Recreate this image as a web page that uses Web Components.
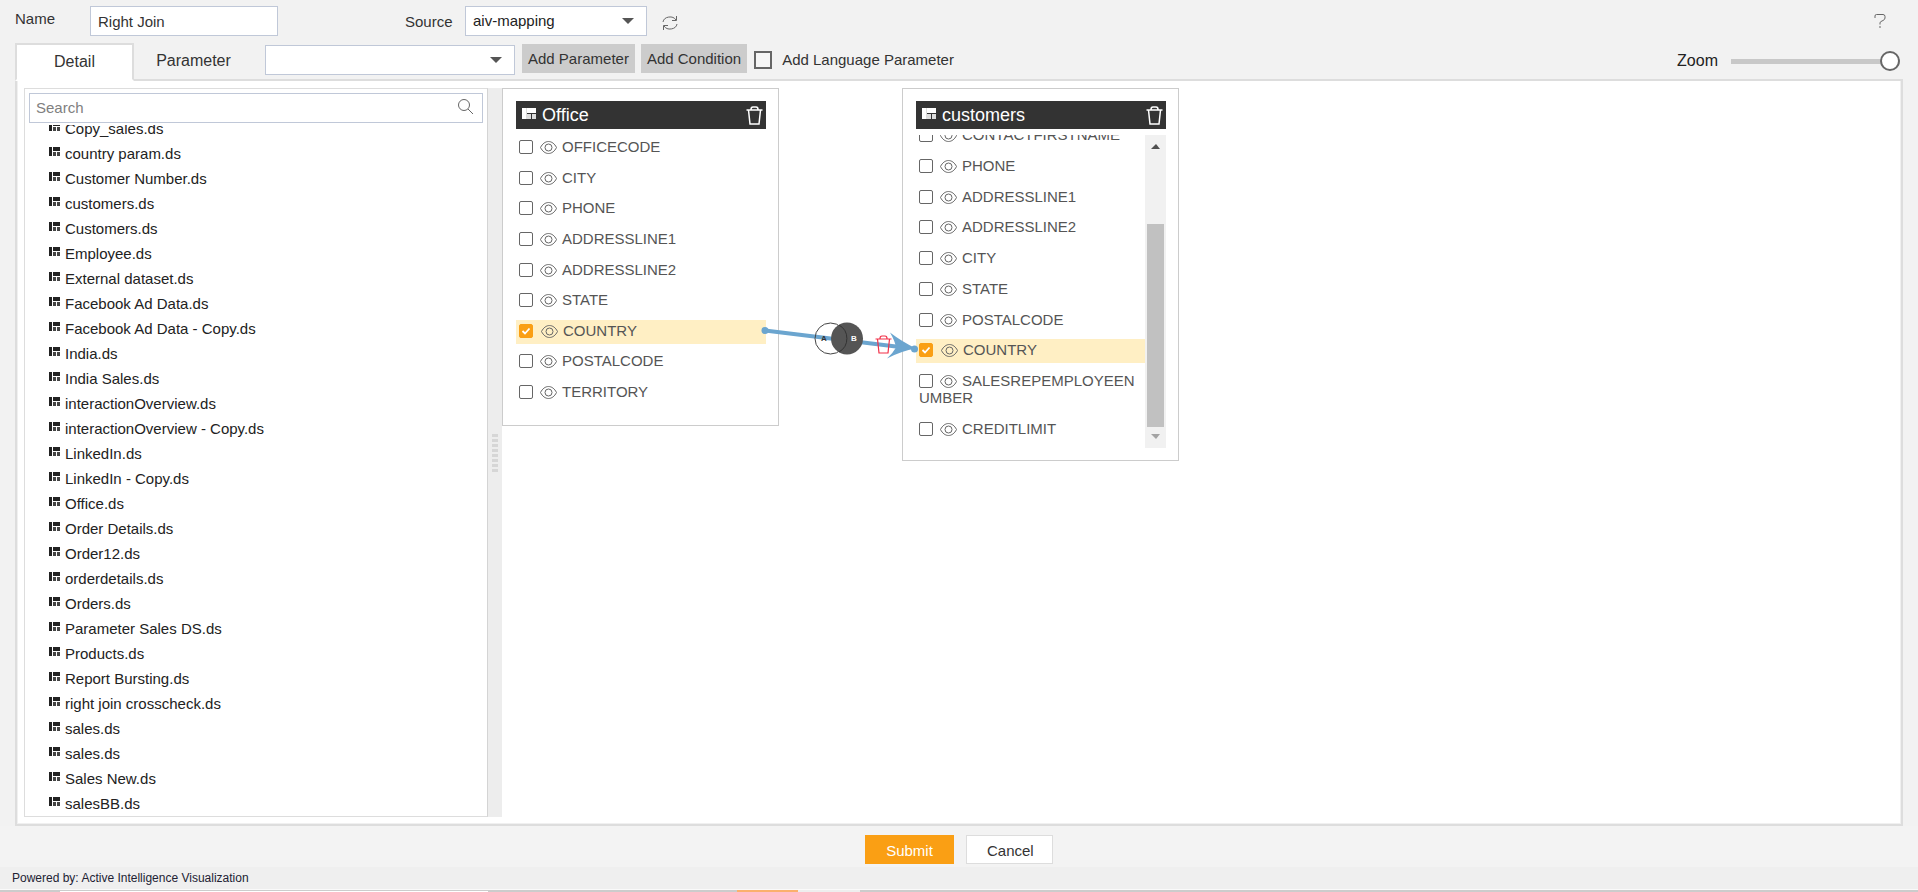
<!DOCTYPE html>
<html lang="en">
<head>
<meta charset="utf-8">
<title>Right Join - Dataset</title>
<style>
  body { margin: 0; font-family: "Liberation Sans", Arial, sans-serif; font-size: 15px; color: #333; background: #f2f2f2; }
</style>
</head>
<body>
<aiv-app>
  <aiv-top-bar slot="top"></aiv-top-bar>
  <aiv-tab-bar slot="tabs"></aiv-tab-bar>
  <aiv-file-tree slot="tree">
    <aiv-file>Copy_sales.ds</aiv-file>
    <aiv-file>country param.ds</aiv-file>
    <aiv-file>Customer Number.ds</aiv-file>
    <aiv-file>customers.ds</aiv-file>
    <aiv-file>Customers.ds</aiv-file>
    <aiv-file>Employee.ds</aiv-file>
    <aiv-file>External dataset.ds</aiv-file>
    <aiv-file>Facebook Ad Data.ds</aiv-file>
    <aiv-file>Facebook Ad Data - Copy.ds</aiv-file>
    <aiv-file>India.ds</aiv-file>
    <aiv-file>India Sales.ds</aiv-file>
    <aiv-file>interactionOverview.ds</aiv-file>
    <aiv-file>interactionOverview - Copy.ds</aiv-file>
    <aiv-file>LinkedIn.ds</aiv-file>
    <aiv-file>LinkedIn - Copy.ds</aiv-file>
    <aiv-file>Office.ds</aiv-file>
    <aiv-file>Order Details.ds</aiv-file>
    <aiv-file>Order12.ds</aiv-file>
    <aiv-file>orderdetails.ds</aiv-file>
    <aiv-file>Orders.ds</aiv-file>
    <aiv-file>Parameter Sales DS.ds</aiv-file>
    <aiv-file>Products.ds</aiv-file>
    <aiv-file>Report Bursting.ds</aiv-file>
    <aiv-file>right join crosscheck.ds</aiv-file>
    <aiv-file>sales.ds</aiv-file>
    <aiv-file>sales.ds</aiv-file>
    <aiv-file>Sales New.ds</aiv-file>
    <aiv-file>salesBB.ds</aiv-file>
  </aiv-file-tree>
  <aiv-canvas slot="canvas">
    <aiv-dataset style="left:0;top:0;--view:278px;--rows:269px">
      <span slot="title">Office</span>
      <aiv-column>OFFICECODE</aiv-column>
      <aiv-column>CITY</aiv-column>
      <aiv-column>PHONE</aiv-column>
      <aiv-column>ADDRESSLINE1</aiv-column>
      <aiv-column>ADDRESSLINE2</aiv-column>
      <aiv-column>STATE</aiv-column>
      <aiv-column checked>COUNTRY</aiv-column>
      <aiv-column>POSTALCODE</aiv-column>
      <aiv-column>TERRITORY</aiv-column>
    </aiv-dataset>
    <aiv-dataset scrolled style="left:400px;top:0;--view:313px;--rows:318px">
      <span slot="title">customers</span>
      <aiv-column>CONTACTFIRSTNAME</aiv-column>
      <aiv-column>PHONE</aiv-column>
      <aiv-column>ADDRESSLINE1</aiv-column>
      <aiv-column>ADDRESSLINE2</aiv-column>
      <aiv-column>CITY</aiv-column>
      <aiv-column>STATE</aiv-column>
      <aiv-column>POSTALCODE</aiv-column>
      <aiv-column checked>COUNTRY</aiv-column>
      <aiv-column>SALESREPEMPLOYEENUMBER</aiv-column>
      <aiv-column>CREDITLIMIT</aiv-column>
    </aiv-dataset>
    <aiv-join-link></aiv-join-link>
  </aiv-canvas>
  <aiv-actions slot="actions"></aiv-actions>
  <aiv-footer slot="footer">Powered by: Active Intelligence Visualization</aiv-footer>
</aiv-app>

<script>
const define = (name, html) => {
  const template = document.createElement('template');
  template.innerHTML = '<style>*{box-sizing:border-box}svg{display:block;fill:none}button,input,select{font:inherit;margin:0;border-radius:0}</style>' + html;
  customElements.define(name, class extends HTMLElement {
    constructor() {
      super();
      this.attachShadow({ mode: 'open' }).append(template.content.cloneNode(true));
    }
    connectedCallback() {
      const box = this.shadowRoot.querySelector('input.pick');
      if (box) box.checked = this.hasAttribute('checked');
    }
  });
};

const trash = `<path d="M.500 4h16M5 3.500Q5 1 7 1h3q2 0 2 2.500M2.500 4l1.500 14h9l1.500-14"/>`;

define('aiv-app', `
<style>
  :host { display: flex; flex-direction: column; height: 100vh; min-height: 640px; }
  main { flex: 1; min-height: 0; margin: 0 15px; display: flex; background: #fff;
         border: 2px solid #ddd; border-top: 0; padding: 7px 0 7px 7px; box-shadow: inset -1px -1px #f0f0f0, inset 1px 0 #f0f0f0; }
  .split { flex: none; width: 14px; background: #ededed; display: flex; align-items: center; justify-content: center; }
  .grip { width: 6px; height: 38px; background: repeating-linear-gradient(#d6d6d6 0 3px, #ededed 3px 5px); }
</style>
<slot name="top"></slot>
<slot name="tabs"></slot>
<main><slot name="tree"></slot><div class="split"><div class="grip"></div></div><slot name="canvas"></slot></main>
<slot name="actions"></slot>
<slot name="footer"></slot>`);

const fieldStyle = `
  .combo { display: grid; height: 30px; }
  .combo > * { grid-area: 1 / 1; }
  .combo svg { align-self: center; justify-self: end; margin-right: 13px; pointer-events: none; fill: #555; }
  select { appearance: none; width: 100%; height: 30px; background: #fff; border: 1px solid #c0c8d8; color: #222; padding: 0 7px 2px; }`;
const caret = `<svg width="12" height="6"><path d="M0 0h12L6 6z"/></svg>`;

define('aiv-top-bar', `
<style>
  :host { display: flex; align-items: flex-start; height: 43px; padding: 6px 0 0 15px; box-sizing: border-box; }
  label { line-height: 25px; }
  .name { width: 75px; }
  input { width: 188px; height: 30px; border: 1px solid #c0c8d8; background: #fff; color: #333; padding: 0 7px; outline: 0; }
  .source { margin-left: 127px; width: 60px; padding-top: 3px; }
  .combo { width: 182px; }
  button { border: 0; background: none; padding: 0; color: #666; }
  .refresh { margin: 9px 0 0 15px; }
  .help { margin: 7px 32px 0 auto; }
  ${fieldStyle}
</style>
<label class="name" for="n">Name</label><input id="n" value="Right Join">
<label class="source" for="s">Source</label>
<div class="combo"><select id="s"><option>aiv-mapping</option></select>${caret}</div>
<button class="refresh" aria-label="Refresh"><svg width="16" height="16" stroke="#666"><path d="M1 7a7 6 0 0 1 13-2M15 9a7 6 0 0 1-13 2M14.500 1v4.500H10M1.500 15v-4.500H6"/></svg></button>
<button class="help" aria-label="Help"><svg width="12" height="16" stroke="#666"><path d="M1 5V3Q1 1.500 2.500 1.500H9Q11 1.500 11 3.500V5Q11 6.500 9 7.500L7 8.500Q6 9 6 10v1.500M6 13v2"/></svg></button>`);

define('aiv-tab-bar', `
<style>
  :host { display: flex; align-items: flex-start; height: 38px; padding: 0 15px; box-sizing: border-box;
          background: linear-gradient(#ddd, #ddd) 15px 100% / calc(100% - 30px) 2px no-repeat; }
  button { border: 0; color: #333; padding: 0; }
  .tab { font-size: 16px; background: none; height: 36px; }
  .on { width: 119px; height: 38px; background: #fff; border: 2px solid #ddd; border-bottom-color: #fff; }
  .off { width: 119px; }
  .combo { width: 250px; margin: 2px 7px 0 12px; }
  .add { background: #ccc; height: 29px; margin: 1px 6px 0 0; padding: 0 6px; }
  .tick { appearance: none; width: 18px; height: 18px; border: 2px solid #666; background: #f6f6f6; margin: 8px 10px 0 1px; }
  label { line-height: 34px; }
  .zoom { font-size: 16px; line-height: 36px; margin: 0 13px 0 auto; color: #222; }
  .range { appearance: none; width: 169px; height: 20px; margin: 8px 3px 0 0; background: none; }
  .range::-webkit-slider-runnable-track { height: 5px; background: #c8c8c8; }
  .range::-webkit-slider-thumb { appearance: none; box-sizing: border-box; width: 20px; height: 20px; margin-top: -8px; border: 2px solid #666; border-radius: 50%; background: #fff; }
  ${fieldStyle}
</style>
<button class="tab on">Detail</button><button class="tab off">Parameter</button>
<div class="combo"><select aria-label="Parameter type"><option></option></select>${caret}</div>
<button class="add">Add Parameter</button><button class="add">Add Condition</button>
<input class="tick" id="l" type="checkbox"><label for="l">Add Language Parameter</label>
<label class="zoom" for="z">Zoom</label><input class="range" id="z" type="range" value="100">`);

define('aiv-file-tree', `
<style>
  :host { display: flex; flex-direction: column; flex: none; width: 464px; border: 1px solid #ddd; border-right-color: #d4d4d4; box-sizing: border-box; }
  .search { display: flex; align-items: center; height: 30px; margin: 4px; margin-bottom: 2px; border: 1px solid #c0c8d8; }
  input { flex: 1; border: 0; outline: 0; background: none; padding: 0 6px 2px; height: 28px; }
  input::placeholder { color: #808080; }
  svg { margin: 0 8px 4px 0; }
  .list { flex: 1; min-height: 0; overflow: hidden; display: flex; flex-direction: column; justify-content: flex-end; }
</style>
<div class="search"><input type="search" placeholder="Search" aria-label="Search"><svg width="17" height="17" stroke="#666"><circle cx="7" cy="7" r="5.500"/><path d="M11 11L16 16"/></svg></div>
<div class="list"><slot></slot></div>`);

define('aiv-file', `
<style>
  :host { display: flex; flex: none; align-items: center; height: 25px; padding-left: 24px; gap: 5px; color: #222; }
  svg { margin-bottom: 4px; }
</style>
<svg width="11" height="9"><path fill="#222" d="M0 0h3v9H0zM4 0h7v4H4z"/><path fill="#444" d="M4 5h3v4H4zM8 5h3v4H8z"/></svg><span><slot></slot></span>`);

define('aiv-canvas', `
<style>:host { display: block; flex: 1; min-width: 0; position: relative; overflow: hidden; }</style>
<slot></slot>`);

define('aiv-dataset', `
<style>
  :host { position: absolute; width: 277px; box-sizing: border-box; border: 1px solid #ccc; padding: 12px 12px 12px 13px; background: #fff; }
  header { display: flex; align-items: center; height: 28px; background: #333; color: #fff; font-size: 18px; padding: 0 3px 0 6px; }
  header svg { margin-bottom: 4px; }
  .title { margin-left: 6px; line-height: 28px; }
  button { margin-left: auto; border: 0; padding: 0; background: none; }
  button svg { margin: 0; }
  .view { display: flex; align-items: flex-start; height: var(--view); margin-top: 6px; padding-top: 1px; overflow: hidden; }
  .rows { flex: 1; min-width: 0; height: var(--rows); display: flex; flex-direction: column; justify-content: space-between; }
  .bar { display: none; width: 21px; flex: none; background: #f1f1f1; flex-direction: column; align-items: center; align-self: stretch; }
  .thumb { width: 17px; height: 203px; margin: 0 0 7px; background: #c1c1c1; }
  .bar svg:first-child { margin: 9px 0 auto; }
  .bar svg:last-child { margin-bottom: 9px; }
  :host([scrolled]) .view { padding-top: 0; align-items: flex-end; }
  :host([scrolled]) .rows { margin-bottom: 6px; }
  :host([scrolled]) .bar { display: flex; }
</style>
<header><svg width="14" height="11"><path fill="#fff" d="M0 0h4v11H0zM5 0h9v5H5z"/><path fill="#ddd" d="M4 0h1v11H4zM5 6h4v5H5zM10 6h4v5h-4z"/></svg><span class="title"><slot name="title"></slot></span><button aria-label="Remove dataset"><svg width="17" height="19" stroke="#fff" stroke-width="1.500">${trash}</svg></button></header>
<div class="view"><div class="rows"><slot></slot></div>
<div class="bar"><svg width="9" height="5"><path fill="#505050" d="M0 5h9L5 0z"/></svg><div class="thumb"></div><svg width="9" height="5"><path fill="#a3a3a3" d="M0 0h9L5 5z"/></svg></div></div>`);

define('aiv-column', `
<style>
  :host { display: block; flex: none; padding: 2px 0 5px 3px; line-height: 17px; color: #555; word-break: break-all; }
  :host([checked]) { background: #ffefc4; }
  input { appearance: none; width: 14px; height: 14px; border: 1px solid #666; border-radius: 2px; background: #fff; vertical-align: -2px; margin-right: 7px; }
  input:checked { border-color: #fa9f14; background: #fa9f14 url("data:image/svg+xml,%3Csvg xmlns='http://www.w3.org/2000/svg' width='12' height='12'%3E%3Cpath d='M2.500 6l2.500 2.500 4.500-5' fill='none' stroke='%23fff' stroke-width='1.800'/%3E%3C/svg%3E"); margin-right: 8px; }
  svg { display: inline-block; vertical-align: -2px; margin-right: 5px; }
</style>
<label><input class="pick" type="checkbox"><svg width="17" height="13" stroke="#666"><path d="M.500 6.500C4.500-1.500 12.500-1.500 16.500 6.500C12.500 14.500 4.500 14.500 .500 6.500z"/><circle cx="8.500" cy="6.500" r="3.500"/></svg><slot></slot></label>`);

define('aiv-join-link', `
<style>
  :host { position: absolute; left: 256px; top: 232px; pointer-events: none; }
  text { font-size: 8px; font-weight: 700; }
</style>
<svg width="164" height="45" viewBox="758 320 164 45">
  <path d="M765 330.500L900 347" stroke="#6ba5cf" stroke-width="4"/>
  <circle cx="765" cy="330.500" r="3.500" fill="#6ba5cf"/>
  <circle cx="830.500" cy="338.500" r="15.500" stroke="#444"/>
  <circle cx="847" cy="338.500" r="16" fill="#555"/>
  <path d="M839 325a15.500 15.500 0 0 1 0 27" stroke="#333"/>
  <text x="821" y="341" fill="#333">A</text><text x="851" y="341" fill="#fff">B</text>
  <g transform="translate(875 335)" stroke="#f23048" stroke-width="1.200">${trash}</g>
  <path d="M890 332.500Q901 341 916 348.500Q901 351 887 358.500Q893 353 896 347.500Q895 341 890 332.500z" fill="#6ba5cf"/>
  <circle cx="914.500" cy="349" r="3.500" fill="#6ba5cf"/>
</svg>`);

define('aiv-actions', `
<style>
  :host { display: flex; flex: none; justify-content: center; gap: 12px; padding: 9px 0 3px; background: #f3f3f3; }
  button { height: 29px; padding: 2px 20px 0; }
  .ok { width: 89px; border: 0; background: #fa9f14; color: #fff; }
  .no { width: 87px; border: 1px solid #ddd; background: #fff; color: #333; }
</style>
<button class="ok">Submit</button><button class="no">Cancel</button>`);

define('aiv-footer', `
<style>
  :host { display: block; flex: none; background: #efefef; font-size: 12px; line-height: 22px; color: #223; }
  p { margin: 0; padding-left: 12px; }
  .strip { display: flex; height: 3px; border-top: 1px solid #fafafa; background: #ccc; }
  .strip i:nth-child(1) { width: 428px; margin-left: 60px; background: #fff; border-top: 1px solid #ccc; }
  .strip i:nth-child(2) { width: 61px; margin-left: 249px; background: #fbb06c; }
  .strip i:nth-child(3) { width: 62px; background: #eee; }
</style>
<p><slot></slot></p><div class="strip"><i></i><i></i><i></i></div>`);
</script>
</body>
</html>
